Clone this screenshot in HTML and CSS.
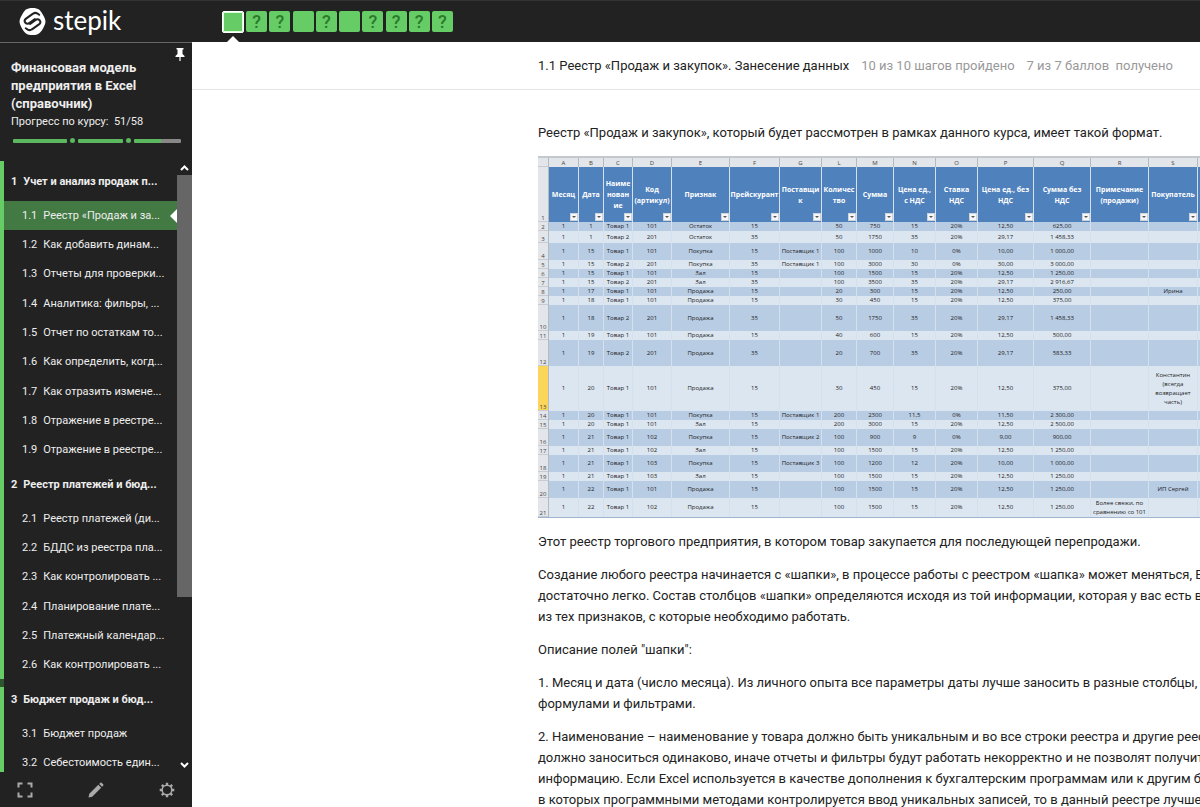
FILE: index.html
```html
<!DOCTYPE html>
<html lang="ru">
<head>
<meta charset="utf-8">
<title>Реестр «Продаж и закупок» – Stepik</title>
<link rel="stylesheet" href="styles.css">
</head>
<body>
<header class="topbar">
  <a class="brand" href="#">
    <svg class="brand-mark" viewBox="0 0 26 26" aria-hidden="true">
      <path d="M13 0C19 0 20.500 2 23 6.500C25.500 11 26.800 13 23.500 19C20.500 24.500 18.500 26 13 26C7.500 26 5.500 24.500 2.500 19C-.8 13 .5 11 3 6.500C5.500 2 7 0 13 0Z" fill="#fff"/>
      <g fill="none" stroke="#222" stroke-width="2" stroke-linecap="round" stroke-linejoin="round">
        <path d="M19.500 6.500L17.500 5.200Q15.500 4 13.500 5.500L6.800 10.200Q4.300 12.200 6.200 14.300Q8 16 10.300 14.200L15.300 10.700"/>
        <path d="M6.500 19.500L8.500 20.800Q10.500 22 12.500 20.500L19.200 15.800Q21.700 13.800 19.800 11.700Q18 10 15.700 11.800L10.700 15.300"/>
      </g>
    </svg>
    <span class="brand-name">stepik</span>
  </a>
  <nav class="steps" aria-label="Шаги урока">
    <a class="step step-current" href="#" aria-label="Шаг 1"></a>
    <a class="step" href="#">?</a>
    <a class="step" href="#">?</a>
    <a class="step" href="#" aria-label="Шаг 4"></a>
    <a class="step" href="#">?</a>
    <a class="step" href="#" aria-label="Шаг 6"></a>
    <a class="step" href="#">?</a>
    <a class="step" href="#">?</a>
    <a class="step" href="#">?</a>
    <a class="step" href="#">?</a>
  </nav>
</header>
<div class="workspace">
  <aside class="sidebar">
    <div class="course">
      <button class="pin" type="button" aria-label="Закрепить">
        <svg viewBox="0 0 10 13"><path d="M1.500 0H8.500V1.500H7.500V6L9.500 8V9H5.600V13H4.400V9H.5V8L2.500 6V1.500H1.500Z" fill="#fff"/></svg>
      </button>
      <h1 class="course-title">Финансовая модель предприятия в Excel (справочник)</h1>
      <p class="course-progress">Прогресс по курсу:&nbsp; 51/58</p>
      <div class="track">
        <span class="bar bar-first"></span><span class="dot"></span>
        <span class="bar bar-second"></span><span class="dot"></span>
        <span class="bar bar-third"></span>
      </div>
    </div>
    <div class="toc">
      <div class="rail"><span class="rail-top"></span><span class="rail-mid"></span><span class="rail-end"></span></div>
      <nav class="toc-list" aria-label="Содержание курса">
        <h2 class="section"><span>1</span><span class="label">Учет и анализ продаж п...</span></h2>
        <ul class="lessons">
          <li><a class="lesson lesson-current" href="#"><span>1.1</span><span class="label">Реестр «Продаж и за...</span></a></li>
          <li><a class="lesson" href="#"><span>1.2</span><span class="label">Как добавить динам...</span></a></li>
          <li><a class="lesson" href="#"><span>1.3</span><span class="label">Отчеты для проверки...</span></a></li>
          <li><a class="lesson" href="#"><span>1.4</span><span class="label">Аналитика: фильры, ...</span></a></li>
          <li><a class="lesson" href="#"><span>1.5</span><span class="label">Отчет по остаткам то...</span></a></li>
          <li><a class="lesson" href="#"><span>1.6</span><span class="label">Как определить, когд...</span></a></li>
          <li><a class="lesson" href="#"><span>1.7</span><span class="label">Как отразить измене...</span></a></li>
          <li><a class="lesson" href="#"><span>1.8</span><span class="label">Отражение в реестре...</span></a></li>
          <li><a class="lesson" href="#"><span>1.9</span><span class="label">Отражение в реестре...</span></a></li>
        </ul>
        <h2 class="section"><span>2</span><span class="label">Реестр платежей и бюд...</span></h2>
        <ul class="lessons">
          <li><a class="lesson" href="#"><span>2.1</span><span class="label">Реестр платежей (ди...</span></a></li>
          <li><a class="lesson" href="#"><span>2.2</span><span class="label">БДДС из реестра пла...</span></a></li>
          <li><a class="lesson" href="#"><span>2.3</span><span class="label">Как контролировать ...</span></a></li>
          <li><a class="lesson" href="#"><span>2.4</span><span class="label">Планирование плате...</span></a></li>
          <li><a class="lesson" href="#"><span>2.5</span><span class="label">Платежный календар...</span></a></li>
          <li><a class="lesson" href="#"><span>2.6</span><span class="label">Как контролировать ...</span></a></li>
        </ul>
        <h2 class="section"><span>3</span><span class="label">Бюджет продаж и бюд...</span></h2>
        <ul class="lessons">
          <li><a class="lesson" href="#"><span>3.1</span><span class="label">Бюджет продаж</span></a></li>
          <li><a class="lesson" href="#"><span>3.2</span><span class="label">Себестоимость един...</span></a></li>
        </ul>
      </nav>
      <div class="scroll">
        <button class="scroll-button" type="button" aria-label="Вверх"><svg viewBox="0 0 9 6"><path d="M1 5L4.500 1.500L8 5" fill="none" stroke="#fff" stroke-width="2"/></svg></button>
        <span class="thumb"></span>
        <button class="scroll-button scroll-down" type="button" aria-label="Вниз"><svg viewBox="0 0 9 6"><path d="M1 1L4.500 4.500L8 1" fill="none" stroke="#fff" stroke-width="2"/></svg></button>
      </div>
    </div>
    <div class="tools">
      <button class="tool" type="button" aria-label="Во весь экран"><svg viewBox="0 0 16 16"><path d="M1.500 5.500V1.500H5.500M10.500 1.500H14.500V5.500M14.500 10.500V14.500H10.500M5.500 14.500H1.500V10.500" fill="none" stroke="#aaa" stroke-width="2"/></svg></button>
      <button class="tool" type="button" aria-label="Редактировать"><svg viewBox="0 0 16 16"><path d="M.5 15.500L1.300 11.800L10.300 2.800L13.200 5.700L4.200 14.700ZM11.200 1.900L12.400 .7Q13 .2 13.600 .7L15.300 2.400Q15.800 3 15.300 3.600L14.100 4.800Z" fill="#aaa"/></svg></button>
      <button class="tool" type="button" aria-label="Настройки"><svg viewBox="0 0 16 16"><circle cx="8" cy="8" r="4.800" fill="none" stroke="#aaa" stroke-width="1.500"/><path d="M8 .7V3M8 13V15.300M.7 8H3M13 8H15.300M2.800 2.800L4.500 4.500M11.500 11.500L13.200 13.200M2.800 13.200L4.500 11.500M11.500 4.500L13.200 2.800" stroke="#aaa" stroke-width="2.400"/></svg></button>
    </div>
  </aside>
  <main class="content">
    <div class="lesson-head">
      <span class="lesson-name">1.1 Реестр «Продаж и закупок». Занесение данных</span>
      <span class="lesson-stat">10 из 10 шагов пройдено</span>
      <span class="lesson-stat">7 из 7 баллов&nbsp; получено</span>
    </div>
    <article class="article">
      <p>Реестр «Продаж и закупок», который будет рассмотрен в рамках данного курса, имеет такой формат.</p>
      <table class="sheet">
        <colgroup><col class="w11"><col class="w30"><col class="w25"><col class="w29"><col class="w39"><col class="w58"><col class="w50"><col class="w42"><col class="w35"><col class="w37"><col class="w42"><col class="w42"><col class="w56"><col class="w57"><col class="w58"><col class="w49"><col class="w11"></colgroup>
        <thead>
          <tr class="letters"><th class="corner"></th><th>A</th><th>B</th><th>C</th><th>D</th><th>E</th><th>F</th><th>G</th><th>L</th><th>M</th><th>N</th><th>O</th><th>P</th><th>Q</th><th>R</th><th>S</th><th></th></tr>
          <tr class="titles"><th>1</th>
            <th>Месяц<button class="filter" type="button" aria-label="Фильтр"></button></th>
            <th>Дата<button class="filter" type="button" aria-label="Фильтр"></button></th>
            <th>Наиме<br>нован<br>ие<button class="filter" type="button" aria-label="Фильтр"></button></th>
            <th>Код<br>(артикул)<button class="filter" type="button" aria-label="Фильтр"></button></th>
            <th>Признак<button class="filter" type="button" aria-label="Фильтр"></button></th>
            <th>Прейскурант<button class="filter" type="button" aria-label="Фильтр"></button></th>
            <th>Поставщи<br>к<button class="filter" type="button" aria-label="Фильтр"></button></th>
            <th>Количес<br>тво<button class="filter" type="button" aria-label="Фильтр"></button></th>
            <th>Сумма<button class="filter" type="button" aria-label="Фильтр"></button></th>
            <th>Цена ед.,<br>с НДС<button class="filter" type="button" aria-label="Фильтр"></button></th>
            <th>Ставка<br>НДС<button class="filter" type="button" aria-label="Фильтр"></button></th>
            <th>Цена ед., без<br>НДС<button class="filter" type="button" aria-label="Фильтр"></button></th>
            <th>Сумма без<br>НДС<button class="filter" type="button" aria-label="Фильтр"></button></th>
            <th>Примечание<br>(продажи)<button class="filter" type="button" aria-label="Фильтр"></button></th>
            <th>Покупатель<button class="filter" type="button" aria-label="Фильтр"></button></th>
            <th></th></tr>
        </thead>
        <tbody>
          <tr class="h9"><th>2</th><td>1</td><td>1</td><td>Товар 1</td><td>101</td><td>Остаток</td><td>15</td><td></td><td>50</td><td>750</td><td>15</td><td>20%</td><td>12,50</td><td>625,00</td><td></td><td></td><td></td></tr>
          <tr class="h12"><th>3</th><td>1</td><td>1</td><td>Товар 2</td><td>201</td><td>Остаток</td><td>35</td><td></td><td>50</td><td>1750</td><td>35</td><td>20%</td><td>29,17</td><td>1 458,33</td><td></td><td></td><td></td></tr>
          <tr class="h17"><th>4</th><td>1</td><td>15</td><td>Товар 1</td><td>101</td><td>Покупка</td><td>15</td><td>Поставщик 1</td><td>100</td><td>1000</td><td>10</td><td>0%</td><td>10,00</td><td>1 000,00</td><td></td><td></td><td></td></tr>
          <tr class="h9"><th>5</th><td>1</td><td>15</td><td>Товар 2</td><td>201</td><td>Покупка</td><td>35</td><td>Поставщик 1</td><td>100</td><td>3000</td><td>30</td><td>0%</td><td>30,00</td><td>3 000,00</td><td></td><td></td><td></td></tr>
          <tr class="h9"><th>6</th><td>1</td><td>15</td><td>Товар 1</td><td>101</td><td>Зал</td><td>15</td><td></td><td>100</td><td>1500</td><td>15</td><td>20%</td><td>12,50</td><td>1 250,00</td><td></td><td></td><td></td></tr>
          <tr class="h9"><th>7</th><td>1</td><td>15</td><td>Товар 2</td><td>201</td><td>Зал</td><td>35</td><td></td><td>100</td><td>3500</td><td>35</td><td>20%</td><td>29,17</td><td>2 916,67</td><td></td><td></td><td></td></tr>
          <tr class="h9"><th>8</th><td>1</td><td>17</td><td>Товар 1</td><td>101</td><td>Продажа</td><td>15</td><td></td><td>20</td><td>300</td><td>15</td><td>20%</td><td>12,50</td><td>250,00</td><td></td><td>Ирина</td><td></td></tr>
          <tr class="h9"><th>9</th><td>1</td><td>18</td><td>Товар 1</td><td>101</td><td>Продажа</td><td>15</td><td></td><td>30</td><td>450</td><td>15</td><td>20%</td><td>12,50</td><td>375,00</td><td></td><td></td><td></td></tr>
          <tr class="h26"><th>10</th><td>1</td><td>18</td><td>Товар 2</td><td>201</td><td>Продажа</td><td>35</td><td></td><td>50</td><td>1750</td><td>35</td><td>20%</td><td>29,17</td><td>1 458,33</td><td></td><td></td><td></td></tr>
          <tr class="h9"><th>11</th><td>1</td><td>19</td><td>Товар 1</td><td>101</td><td>Продажа</td><td>15</td><td></td><td>40</td><td>600</td><td>15</td><td>20%</td><td>12,50</td><td>500,00</td><td></td><td></td><td></td></tr>
          <tr class="h26"><th>12</th><td>1</td><td>19</td><td>Товар 2</td><td>201</td><td>Продажа</td><td>35</td><td></td><td>20</td><td>700</td><td>35</td><td>20%</td><td>29,17</td><td>583,33</td><td></td><td></td><td></td></tr>
          <tr class="h45 row-active"><th>13</th><td>1</td><td>20</td><td>Товар 1</td><td>101</td><td>Продажа</td><td>15</td><td></td><td>30</td><td>450</td><td>15</td><td>20%</td><td>12,50</td><td>375,00</td><td></td><td>Константин<br>(всегда<br>возвращает<br>часть)</td><td></td></tr>
          <tr class="h9"><th>14</th><td>1</td><td>20</td><td>Товар 1</td><td>101</td><td>Покупка</td><td>15</td><td>Поставщик 1</td><td>200</td><td>2300</td><td>11,5</td><td>0%</td><td>11,50</td><td>2 300,00</td><td></td><td></td><td></td></tr>
          <tr class="h9"><th>15</th><td>1</td><td>20</td><td>Товар 1</td><td>101</td><td>Зал</td><td>15</td><td></td><td>200</td><td>3000</td><td>15</td><td>20%</td><td>12,50</td><td>2 500,00</td><td></td><td></td><td></td></tr>
          <tr class="h17"><th>16</th><td>1</td><td>21</td><td>Товар 1</td><td>102</td><td>Покупка</td><td>15</td><td>Поставщик 2</td><td>100</td><td>900</td><td>9</td><td>0%</td><td>9,00</td><td>900,00</td><td></td><td></td><td></td></tr>
          <tr class="h9"><th>17</th><td>1</td><td>21</td><td>Товар 1</td><td>102</td><td>Зал</td><td>15</td><td></td><td>100</td><td>1500</td><td>15</td><td>20%</td><td>12,50</td><td>1 250,00</td><td></td><td></td><td></td></tr>
          <tr class="h17"><th>18</th><td>1</td><td>21</td><td>Товар 1</td><td>103</td><td>Покупка</td><td>15</td><td>Поставщик 3</td><td>100</td><td>1200</td><td>12</td><td>20%</td><td>10,00</td><td>1 000,00</td><td></td><td></td><td></td></tr>
          <tr class="h9"><th>19</th><td>1</td><td>21</td><td>Товар 1</td><td>103</td><td>Зал</td><td>15</td><td></td><td>100</td><td>1500</td><td>15</td><td>20%</td><td>12,50</td><td>1 250,00</td><td></td><td></td><td></td></tr>
          <tr class="h17"><th>20</th><td>1</td><td>22</td><td>Товар 1</td><td>101</td><td>Продажа</td><td>15</td><td></td><td>100</td><td>1500</td><td>15</td><td>20%</td><td>12,50</td><td>1 250,00</td><td></td><td>ИП Сергей</td><td></td></tr>
          <tr class="h19"><th>21</th><td>1</td><td>22</td><td>Товар 1</td><td>102</td><td>Продажа</td><td>15</td><td></td><td>100</td><td>1500</td><td>15</td><td>20%</td><td>12,50</td><td>1 250,00</td><td>Более свежи, по<br>сравнению со 101</td><td></td><td></td></tr>
        </tbody>
      </table>
      <p>Этот реестр торгового предприятия, в котором товар закупается для последующей перепродажи.</p>
      <p>Создание любого реестра начинается с «шапки», в процессе работы с реестром «шапка» может меняться, Ex<br>достаточно легко. Состав столбцов «шапки» определяются исходя из той информации, которая у вас есть в п<br>из тех признаков, с которые необходимо работать.</p>
      <p>Описание полей "шапки":</p>
      <p>1. Месяц и дата (число месяца). Из личного опыта все параметры даты лучше заносить в разные столбцы, та<br>формулами и фильтрами.</p>
      <p>2. Наименование – наименование у товара должно быть уникальным и во все строки реестра и другие реест<br>должно заноситься одинаково, иначе отчеты и фильтры будут работать некорректно и не позволят получить<br>информацию. Если Excel используется в качестве дополнения к бухгалтерским программам или к другим баз<br>в которых программными методами контролируется ввод уникальных записей, то в данный реестре лучше и</p>
    </article>
  </main>
</div>
</body>
</html>
```

FILE: styles.css
```css
* { box-sizing: border-box; }

body {
  margin: 0;
  height: 100vh;
  display: flex;
  flex-direction: column;
  overflow: hidden;
  font-family: Roboto, "Open Sans", sans-serif;
  font-size: 13px;
  color: #222;
  background: #fff;
}

h1, h2, p, ul { margin: 0; padding: 0; }
ul { list-style: none; }
a { color: inherit; text-decoration: none; }
button { padding: 0; border: 0; background: none; display: block; }
svg { display: block; }

.topbar {
  flex: none;
  height: 42px;
  display: flex;
  align-items: center;
  background: #222;
  border-top: 1px solid #333;
}

.brand {
  width: 222px;
  padding-left: 19px;
  display: flex;
  align-items: center;
  gap: 7px;
  color: #fff;
}
.brand-mark { width: 27px; height: 27px; }
.brand-name { font-family: Lato, sans-serif; font-size: 26px; line-height: 36px; padding-bottom: 4px; }

.steps { width: 231px; display: flex; justify-content: space-between; align-items: center; }
.step {
  position: relative;
  width: 21px;
  height: 21px;
  border-radius: 2px;
  background: #6c6;
  color: #2b7a2b;
  font-size: 18px;
  font-weight: 500;
  line-height: 21px;
  text-align: center;
}
.step-current { width: 22px; height: 22px; border: 1px solid #fff; box-shadow: inset 0 0 0 1px #dfd; }
.step-current::after {
  content: "";
  position: absolute;
  top: 24px;
  left: 3px;
  border: 7px solid transparent;
  border-top: 0;
  border-bottom-color: #fff;
}

.workspace { flex: 1; min-height: 0; display: flex; }

.sidebar {
  flex: none;
  width: 192px;
  display: flex;
  flex-direction: column;
  background: #222;
  border-top: 1px solid #666;
  color: #eee;
}

.course { position: relative; padding: 16px 11px 18px; }
.pin { position: absolute; top: 5px; right: 7px; width: 10px; height: 13px; }
.course-title { font-size: 13px; line-height: 18px; font-weight: 700; padding-right: 30px; }
.course-progress { font-size: 11px; line-height: 18px; }
.track { display: flex; align-items: center; gap: 3px; height: 5px; margin-top: 7px; padding-left: 2px; }
.bar { height: 4px; border-radius: 1px; background: #5cb85f; }
.bar-first { flex: 54; }
.bar-second { flex: 46; }
.bar-third { flex: 47; background: linear-gradient(to right, #5cb85f 58%, #888 58%); }
.dot { width: 5px; height: 5px; border-radius: 50%; background: #5cb85f; }

.toc { flex: 1; min-height: 0; display: flex; overflow: hidden; }
.rail { width: 4px; display: flex; flex-direction: column; }
.rail-top { flex: 518; background: #6c6; }
.rail-mid { flex: 8; background: #2f5530; }
.rail-end { flex: 85; background: #6c6; }
.toc-list { flex: 1; min-width: 0; padding-top: 1px; }

.section { display: flex; gap: 6px; padding-left: 7px; font-size: 11px; font-weight: 700; line-height: 39px; white-space: nowrap; }
.lessons li:nth-child(3n) { padding-bottom: 1px; }
.lesson { position: relative; display: flex; gap: 6px; padding-left: 18px; font-size: 11px; line-height: 29px; white-space: nowrap; }
.lesson-current { background: #437a43; }
.lesson-current::after {
  content: "";
  position: absolute;
  top: 8px;
  right: 0;
  border: 7px solid transparent;
  border-left: 0;
  border-right-color: #fff;
}

.scroll { width: 15px; display: flex; flex-direction: column; }
.scroll-button { height: 14px; display: flex; align-items: center; justify-content: center; }
.scroll-button svg { width: 9px; height: 6px; }
.thumb { flex: none; height: 69%; background: #666; }
.scroll-down { margin-top: auto; }

.tools { height: 35px; display: flex; justify-content: space-between; align-items: center; padding: 0 17px; }
.tool svg { width: 16px; height: 16px; }

.content { flex: 1; min-width: 0; overflow: hidden; }
.lesson-head {
  display: flex;
  gap: 12px;
  padding: 12px 0 12px 346px;
  line-height: 23px;
  border-bottom: 1px solid #e4e4e4;
  white-space: nowrap;
}
.lesson-stat { color: #999; }

.article { padding: 32px 0 0 346px; line-height: 21px; white-space: nowrap; }
.article p { margin-bottom: 12px; }

.sheet {
  table-layout: fixed;
  width: 671px;
  margin: 13px 0 13px;
  border-collapse: separate;
  border-spacing: 0;
  border-top: 2px solid #c4c8ce;
  border-bottom: 1px solid #9fb4cf;
  font-family: "Open Sans", "Noto Sans", sans-serif;
  font-size: 6px;
  line-height: 9px;
  color: #222;
}
.sheet th, .sheet td { padding: 0; text-align: center; vertical-align: middle; border-right: 1px solid #d5e0ee; overflow: hidden; }
.sheet tr th:first-child { background: #e2e5ea; color: #444; font-size: 6px; font-weight: 400; line-height: 8px; vertical-align: bottom; border-right-color: #b5b9c0; box-shadow: inset 0 -1px #c8ccd2; }
.letters { height: 9px; }
.sheet .letters th { background: #e2e5ea; font-weight: 400; color: #444; line-height: 8px; border-right-color: #b5b9c0; }
.titles { height: 55px; }
.titles th { position: relative; background: #4f81bd; color: #fff; font-size: 7px; font-weight: 700; line-height: 11px; }
.filter { position: absolute; right: 0; bottom: 1px; width: 8px; height: 8px; background: #f4f6f8; border: 1px solid #d0d4da; font-size: 0; line-height: 0; }
.filter::after { content: ""; display: block; width: 4px; height: 2px; margin: 0 auto; background: #555; clip-path: polygon(0 0, 100% 0, 50% 100%); }
.sheet tbody tr:nth-child(odd) { background: #b8cce4; }
.sheet tbody tr:nth-child(even) { background: #dce6f1; }
.sheet .row-active th:first-child { background: #fbd65a; }

.h9 { height: 9px; }
.h12 { height: 12px; }
.h17 { height: 17px; }
.h19 { height: 19px; }
.h26 { height: 26px; }
.h45 { height: 45px; }

.w11 { width: 11px; }
.w25 { width: 25px; }
.w29 { width: 29px; }
.w30 { width: 30px; }
.w35 { width: 35px; }
.w37 { width: 37px; }
.w39 { width: 39px; }
.w42 { width: 42px; }
.w49 { width: 49px; }
.w50 { width: 50px; }
.w56 { width: 56px; }
.w57 { width: 57px; }
.w58 { width: 58px; }
```
